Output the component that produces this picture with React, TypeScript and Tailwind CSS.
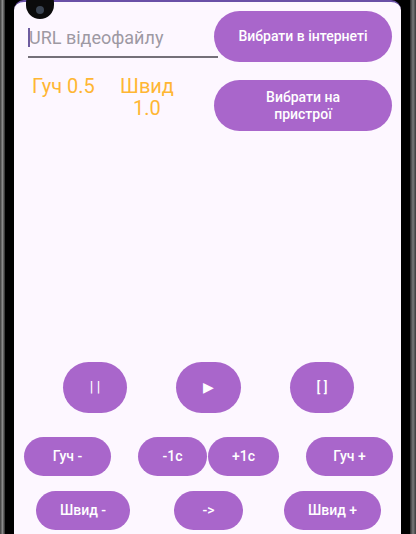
import React from 'react';

const BTN = 'flex items-center justify-center rounded-full bg-[#a966cb] text-white text-[14px] font-medium';

export default function App() {
  return (
    <div
      className="flex w-[416px] h-[534px] overflow-hidden bg-black"
      style={{ fontFamily: 'Roboto, "Noto Sans", sans-serif' }}
    >
      {/* left bezel */}
      <div className="w-[5px] h-full bg-gradient-to-r from-[#3a3a3a] via-[#8a8a8a] to-[#2a2a2a]" />
      <div className="w-[9px] h-full bg-black" />

      {/* screen */}
      <div className="relative flex flex-col w-[387px] h-full bg-[#fdf7ff] border-t-2 border-[#6a50a7] rounded-tl-[10px] rounded-tr-[10px]">
        {/* camera */}
        <div className="absolute left-[12px] top-[-13px] w-[28px] h-[30px] rounded-full bg-[#0b0b0b] flex items-center justify-center">
          <div className="mt-[12px] w-[8px] h-[8px] rounded-full bg-[#3a4452]" />
        </div>

        <div className="flex">
          <div className="ml-[14px] w-[190px] flex flex-col">
            <div className="relative mt-[24px] pb-[6px] border-b-2 border-[#747079]">
              <div className="absolute left-0 top-[2px] w-[2px] h-[19px] bg-[#6e5ca0]" />
              <div className="pl-[1px] text-[18px] leading-[24px] text-[#9d99a3]">URL відеофайлу</div>
            </div>
            <div className="flex mt-[17px] text-[20px] leading-[22px] text-[#ffb633]">
              <div className="ml-[4px] w-[86px]">Гуч 0.5</div>
              <div className="w-[58px] text-center">
                Швид
                <br />
                1.0
              </div>
            </div>
          </div>

          <div className="ml-[-4px] mt-[9px] w-[178px] flex flex-col gap-[18px]">
            <div className={`${BTN} h-[51px]`}>Вибрати в інтернеті</div>
            <div className={`${BTN} h-[51px] text-center leading-[17px]`}>
              Вибрати на
              <br />
              пристрої
            </div>
          </div>
        </div>

        <div className="mt-auto pb-[4px] flex flex-col">
          <div className="flex pl-[49px] gap-[49px]">
            <div className={`${BTN} w-[64px] h-[51px]`}>| |</div>
            <div className={`${BTN} w-[65px] h-[51px] text-[11px]`}>▶</div>
            <div className={`${BTN} w-[64px] h-[51px]`}>[ ]</div>
          </div>

          <div className="flex mt-[24px] pl-[10px]">
            <div className={`${BTN} w-[87px] h-[39px]`}>Гуч -</div>
            <div className={`${BTN} ml-[27px] w-[69px] h-[39px]`}>-1с</div>
            <div className={`${BTN} ml-[1px] w-[71px] h-[39px]`}>+1с</div>
            <div className={`${BTN} ml-[27px] w-[87px] h-[39px]`}>Гуч +</div>
          </div>

          <div className="flex mt-[15px] pl-[22px]">
            <div className={`${BTN} w-[94px] h-[39px]`}>Швид -</div>
            <div className={`${BTN} ml-[44px] w-[69px] h-[39px]`}>-&gt;</div>
            <div className={`${BTN} ml-[41px] w-[97px] h-[39px]`}>Швид +</div>
          </div>
        </div>
      </div>

      {/* right bezel */}
      <div className="w-[9px] h-full bg-black" />
      <div className="w-[6px] h-full bg-gradient-to-r from-[#2a2a2a] via-[#7a7a7a] to-[#3a3a3a]" />
    </div>
  );
}
